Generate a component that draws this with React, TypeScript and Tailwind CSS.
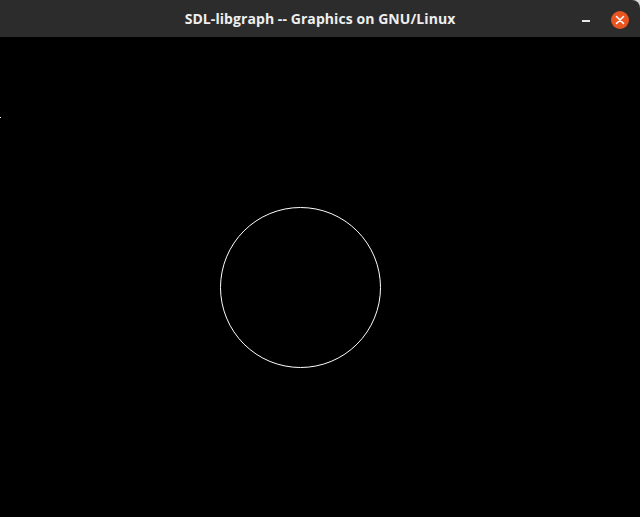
export default function App() {
  return (
    <div className="w-[640px] h-[517px] flex flex-col bg-[#d8d8d8] overflow-hidden">
      <div className="h-[37px] flex items-center bg-[#2c2c2c] rounded-tr-[8px] relative shrink-0">
        <div className="flex-1 text-center text-[14px] font-bold text-[#eeeeee] font-['Open_Sans',sans-serif] tracking-[0.07px]">
          SDL-libgraph -- Graphics on GNU/Linux
        </div>
        <div className="absolute right-0 top-0 h-[37px] flex items-center">
          <div className="w-[8px] h-[2px] bg-[#e8e8e8] mt-[5px] mr-[21px]" />
          <div className="w-[18px] h-[18px] rounded-full bg-[#e95420] flex items-center justify-center mr-[11px] mt-[2px]">
            <svg width="10" height="10" viewBox="0 0 10 10">
              <path d="M1.5 1.5 L8.5 8.5 M8.5 1.5 L1.5 8.5" stroke="#ffffff" strokeWidth="1.6" strokeLinecap="round" />
            </svg>
          </div>
        </div>
      </div>
      <div className="w-[640px] h-[480px] bg-black">
        <svg width="640" height="480" viewBox="0 0 640 480" className="block">
          <rect x="0" y="80" width="1" height="1" fill="#ffffff" />
          <circle cx="300.5" cy="250.5" r="80" fill="none" stroke="#ffffff" strokeWidth="1" />
        </svg>
      </div>
    </div>
  );
}
